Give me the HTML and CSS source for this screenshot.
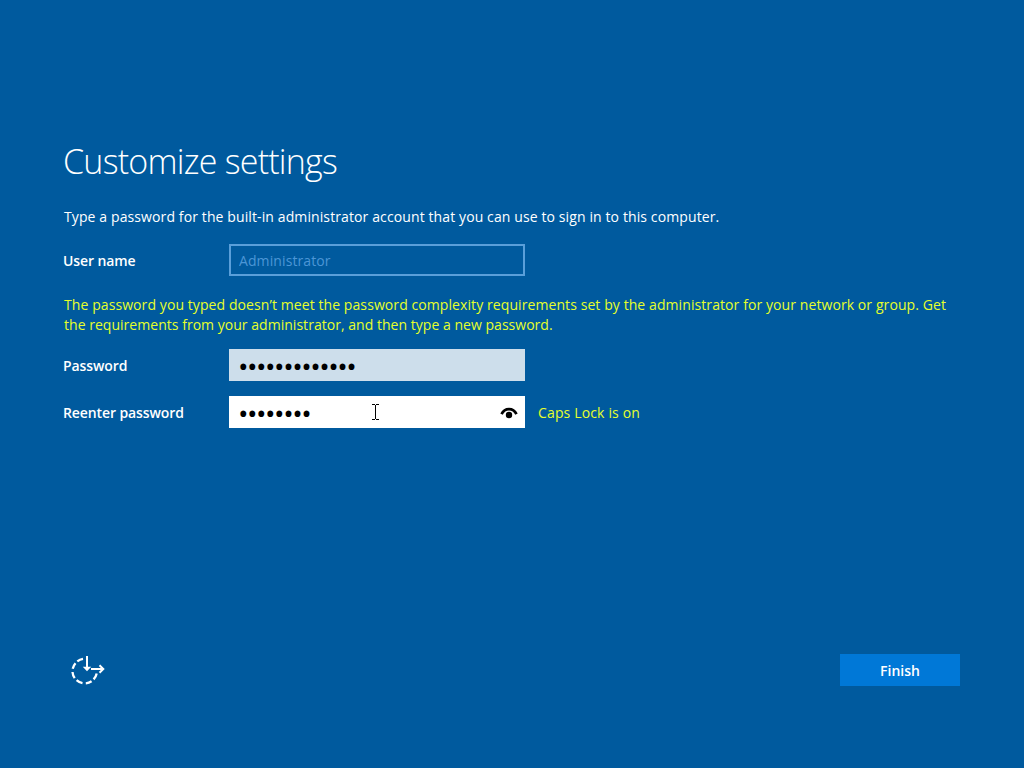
FILE: index.html
```html
<!DOCTYPE html>
<html lang="en">
<head>
    <meta charset="utf-8">
    <title>Customize settings</title>
    <link rel="stylesheet" href="styles.css">
</head>
<body>

<form class="setup">
    <h1>Customize settings</h1>
    <p class="intro">Type a password for the built-in administrator account that you can use to sign in to this computer.</p>

    <div class="row">
        <label for="user">User name</label>
        <div class="field disabled"><input id="user" type="text" value="Administrator" disabled></div>
    </div>

    <p class="error">
        <span class="line first">The password you typed doesn’t meet the password complexity requirements set by the administrator for your network or group. Get</span>
        <span class="line second">the requirements from your administrator, and then type a new password.</span>
    </p>

    <div class="row">
        <label for="password">Password</label>
        <div class="field filled"><input id="password" type="password" value="aaaaaaaaaaaaa"></div>
    </div>

    <div class="row">
        <label for="reenter">Reenter password</label>
        <div class="field">
            <input id="reenter" type="password" value="aaaaaaaa">
            <svg class="reveal" width="18" height="12" viewBox="0 0 18 12">
                <path d="M1.500 7.200C3.200 3.700 5.700 2.100 9 2.100s5.800 1.600 7.500 5.100" fill="none" stroke="#000" stroke-width="2.700"/>
                <circle cx="9" cy="8" r="3.200" fill="#000"/>
            </svg>
            <svg class="cursor" width="7" height="16" viewBox="0 0 7 16" shape-rendering="crispEdges">
                <path d="M0 0h3v1H0zM4 0h3v1H4zM3 1h1v14H3zM0 15h3v1H0zM4 15h3v1H4z" fill="#000"/>
            </svg>
        </div>
        <span class="caps">Caps Lock is on</span>
    </div>

    <div class="footer">
        <svg class="ease" width="34" height="32" viewBox="0 0 34 32">
            <g fill="none" stroke="#fff" stroke-width="2.300">
                <path d="M12 4.900A12.300 12.300 0 0 0 6.300 7.400M4.500 9.200A12.300 12.300 0 0 0 1.700 14.800M1.500 18A12.300 12.300 0 0 0 3.700 24.200M5.600 26.200A12.300 12.300 0 0 0 11.500 29.200M14.800 29.300A12.300 12.300 0 0 0 20.600 27.200M22.600 25.400A12.300 12.300 0 0 0 25.700 19.500"/>
                <path d="M16 2v12M20 15h12M28.500 11.200l3.800 3.800-3.800 3.800" stroke-width="2"/>
            </g>
            <path d="M11.800 12.800h8.400L16 17.300z" fill="#fff"/>
        </svg>
        <button type="button">Finish</button>
    </div>
</form>

</body>
</html>
```

FILE: styles.css
```css
* {
    box-sizing: border-box;
}
body {
    margin: 0;
    height: 768px;
    overflow: hidden;
    background: #005a9e;
    color: white;
    font-family: "Open Sans", "Noto Sans", sans-serif;
    font-size: 14px;
    line-height: 20px;
}
.setup {
    display: flex;
    flex-direction: column;
    height: 768px;
    padding: 138px 64px 82px;
}
h1 {
    margin: 0 0 0 -1px;
    height: 46px;
    font-size: 34px;
    font-weight: 300;
    line-height: 46px;
    white-space: nowrap;
    letter-spacing: -0.76px;
}
p {
    margin: 0;
    white-space: nowrap;
}
.intro {
    margin-top: 23px;
    margin-bottom: 17px;
    letter-spacing: 0.11px;
}
.row {
    display: flex;
    align-items: center;
    height: 32px;
    margin-bottom: 15px;
}
label {
    width: 165px;
    margin-left: -1px;
    margin-right: 1px;
    padding-top: 2px;
    font-weight: 600;
    letter-spacing: -0.1px;
}
.field {
    position: relative;
    display: flex;
    align-items: center;
    width: 296px;
    height: 32px;
    background: white;
}
.field input {
    width: 250px;
    height: 28px;
    padding: 0 0 0 10px;
    border: 0;
    outline: 0;
    background: none;
    color: black;
    font-family: "Open Sans", sans-serif;
    font-size: 14px;
}
.field input[type="password"] {
    padding-top: 1px;
    padding-left: 9px;
    font-size: 28px;
    letter-spacing: -1.5px;
}
.disabled {
    background: none;
    border: 2px solid #5a9fda;
}
.field.disabled input {
    padding-left: 8px;
    color: #4c96d6;
    -webkit-text-fill-color: #4c96d6;
    letter-spacing: 0.1px;
}
.filled {
    background: #cddeeb;
}
.error {
    margin: 4px 0 14px;
    color: #e6ff2b;
}
.line {
    display: block;
}
.first {
    letter-spacing: 0.085px;
}
.second {
    letter-spacing: 0.03px;
}
.reveal {
    position: absolute;
    right: 7px;
    top: 11px;
}
.cursor {
    position: absolute;
    left: 143px;
    top: 8px;
}
.caps {
    margin-left: 13px;
    padding-top: 2px;
    color: #e6ff2b;
    letter-spacing: 0.15px;
}
.footer {
    display: flex;
    justify-content: space-between;
    align-items: center;
    height: 32px;
    margin-top: auto;
}
.ease {
    margin-left: 7px;
}
button {
    width: 120px;
    height: 32px;
    padding: 0;
    border: 0;
    background: #0078d7;
    color: white;
    font-family: "Open Sans", sans-serif;
    font-size: 14px;
    font-weight: 600;
}
```
